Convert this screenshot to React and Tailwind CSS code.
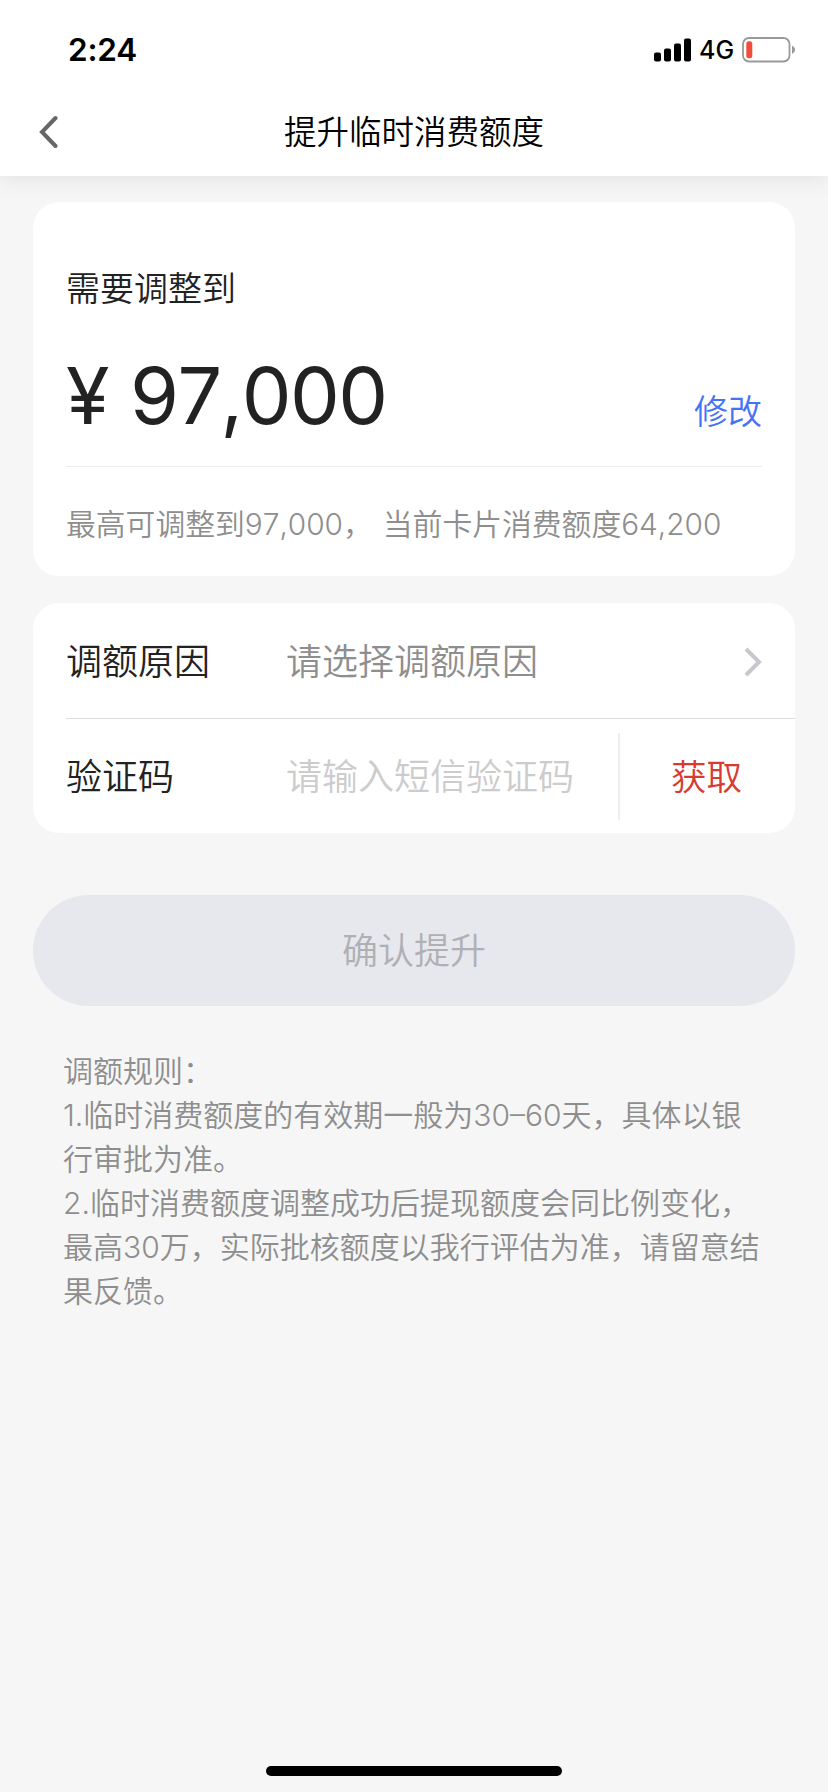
import { useState } from "react";

const rules = [
  "调额规则：",
  "1.临时消费额度的有效期一般为30–60天，具体以银",
  "行审批为准。",
  "2.临时消费额度调整成功后提现额度会同比例变化，",
  "最高30万，实际批核额度以我行评估为准，请留意结",
  "果反馈。",
];

function StatusBar() {
  return (
    <div className="flex h-[88px] items-center justify-between pl-[68px] pr-[33px] pt-[11px] text-black">
      <span className="text-[31.5px] font-semibold leading-none tracking-[-0.2px]">2:24</span>
      <div className="flex items-center">
        <svg width="38" height="24" viewBox="0 0 38 24" fill="currentColor">
          <rect x="0" y="14.5" width="7" height="9" rx="2" />
          <rect x="10" y="10.5" width="7" height="13" rx="2" />
          <rect x="20" y="5.5" width="7" height="18" rx="2" />
          <rect x="30" y="0.5" width="7" height="23" rx="2" />
        </svg>
        <span className="ml-[7px] w-[37px] pt-[2px] text-[25px] font-medium leading-none">4G</span>
        <svg className="-mr-px ml-[6px]" width="54" height="26" viewBox="0 0 54 26">
          <rect x="1" y="1" width="46.5" height="23.5" rx="6" fill="none" stroke="#999" strokeWidth="1.8" />
          <rect x="4.3" y="4.3" width="6" height="17" rx="2.5" fill="#f04e3e" />
          <path d="M50 8.8c4 1.6 4 6.400 0 8z" fill="#999" />
        </svg>
      </div>
    </div>
  );
}

export default function App() {
  const [code, setCode] = useState("");

  return (
    <div className="flex h-[1792px] w-[828px] flex-col bg-[#f6f6f6] font-['Inter','Noto_Sans_CJK_SC',sans-serif] font-[350] text-[#222]">
      <header className="h-[176px] bg-white shadow-[0_4px_20px_rgba(0,0,0,0.08)]">
        <StatusBar />
        <div className="grid h-[88px] grid-cols-[120px_1fr_120px] items-center">
          <svg className="ml-[38px]" width="20" height="34" viewBox="0 0 20 34" fill="none" stroke="#666" strokeWidth="4">
            <path d="M17.500 3L4 17L17.500 31" strokeLinecap="round" />
          </svg>
          <h1 className="pt-[2px] text-center text-[32.5px] leading-[44px] text-black">提升临时消费额度</h1>
        </div>
      </header>

      <main className="flex flex-col px-[33px] pt-[26px]">
        {/* Amount */}
        <section className="h-[374px] rounded-[26px] bg-white px-[33px] pt-[63px]">
          <h2 className="text-[34px] leading-[48px]">需要调整到</h2>
          <div className="flex h-[154px] items-end justify-between border-b border-[#eeeeee]">
            <p className="flex pb-[23px] text-[79px] font-normal leading-[96px]">
              <span className="w-[64px]">¥</span>
              <span className="tracking-[-1.6px] [font-kerning:none]">97,000</span>
            </p>
            <button className="pb-[30px] text-[34px] leading-[48px] text-[#4672f6]">修改</button>
          </div>
          <p className="whitespace-pre pt-[35px] text-[29.8px] leading-[44px] text-[#8e8e8e] [font-kerning:none]">
            最高可调整到97,000，<span className="ml-[10px]">当前卡片消费额度64,200</span>
          </p>
        </section>

        {/* Form */}
        <section className="mt-[27px] h-[230px] rounded-[26px] bg-white pl-[33px] text-[36px]">
          <div className="flex h-[116px] items-center border-b border-[#dedede] pr-[32px]">
            <span className="w-[220px] pt-[2px]">调额原因</span>
            <span className="flex-1 pt-[2px] text-[#8e8e8e]">请选择调额原因</span>
            <svg className="mt-[2px]" width="20" height="30" viewBox="0 0 20 30" fill="none" stroke="#c7c7cc" strokeWidth="4">
              <path d="M3 2L16 15L3 28" />
            </svg>
          </div>
          <div className="flex h-[114px] items-center">
            <span className="w-[220px] pt-[2px]">验证码</span>
            <input
              value={code}
              onChange={(e) => setCode(e.target.value)}
              placeholder="请输入短信验证码"
              className="w-[332px] pt-[2px] outline-none placeholder:text-[#cccccc]"
            />
            <button className="h-[87px] flex-1 border-l-2 border-[#eeeeee] pt-[3px] pr-[2px] text-[35.6px] text-[#d93a32]">获取</button>
          </div>
        </section>

        <button className="mt-[62px] h-[111px] rounded-full bg-[#e7e8ee] text-[36px] text-[#b0b0b4]">确认提升</button>

        <div className="mt-[43px] pl-[30px] text-[30px] leading-[44px] text-[#8e8e8e]">
          {rules.map((line) => (
            <p key={line} className="whitespace-nowrap">{line}</p>
          ))}
        </div>
      </main>

      <div className="mb-[16px] mt-auto h-[10px] w-[296px] self-center rounded-full bg-black" />
    </div>
  );
}
